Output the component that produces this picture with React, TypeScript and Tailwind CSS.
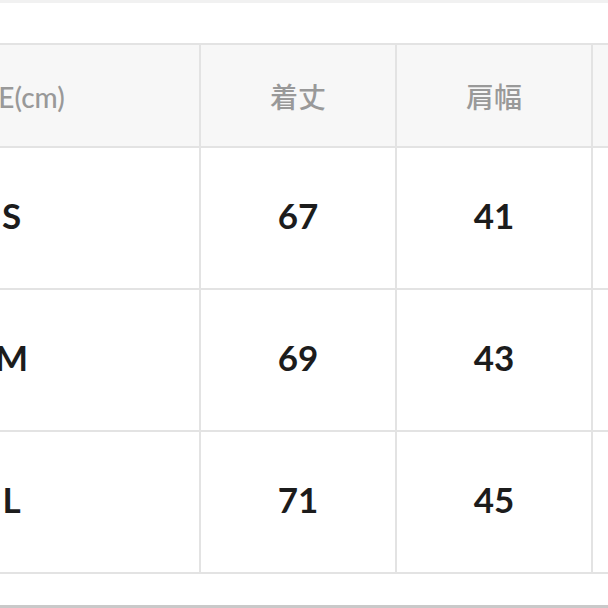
import React from 'react';

const headers = ['SIZE(cm)', '着丈', '肩幅', '身幅'];

const rows = [
  ['S', '67', '41', '50'],
  ['M', '69', '43', '52'],
  ['L', '71', '45', '54'],
];

// 1列目だけ幅が広い（左側は画面外）
const colClass = (i: number) =>
  i === 0 ? 'w-[377px] shrink-0' : 'w-[196px] shrink-0';

const App: React.FC = () => {
  return (
    <div className="w-[608px] h-[608px] overflow-hidden bg-white flex flex-col font-['Lato','Noto_Sans_CJK_JP',sans-serif]">
      <div className="h-[3px] bg-[#f1f1f1]" />
      <div className="h-[40px]" />

      <div className="ml-[-176px] border-t-2 border-[#e3e3e3] flex flex-col">
        <div className="h-[103px] flex bg-[#f7f7f7] border-b-2 border-[#e3e3e3]">
          {headers.map((h, i) => (
            <div
              key={h}
              className={`${colClass(i)} border-r-2 border-[#e3e3e3] flex items-center justify-center text-[28px] font-medium text-[#999999] pt-[2px]`}
            >
              {h}
            </div>
          ))}
        </div>

        {rows.map((row) => (
          <div
            key={row[0]}
            className="h-[142px] flex border-b-2 border-[#e3e3e3]"
          >
            {row.map((cell, i) => (
              <div
                key={i}
                className={`${colClass(i)} border-r-2 border-[#e3e3e3] flex items-center justify-center text-[35px] font-bold text-[#1c1c1c] pb-[6px]`}
              >
                {cell}
              </div>
            ))}
          </div>
        ))}
      </div>

      <div className="flex-1" />
      <div className="h-[3px] bg-[#c9c9c9]" />
    </div>
  );
};

export default App;
